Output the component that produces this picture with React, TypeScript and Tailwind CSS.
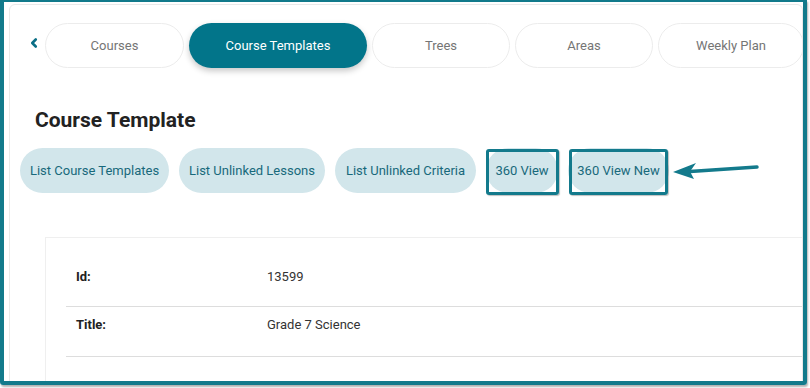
import { ChevronLeft } from 'lucide-react';

const tabs = [
  { label: 'Courses', w: 'w-[139px]' },
  { label: 'Course Templates', w: 'w-[178px]', active: true },
  { label: 'Trees', w: 'w-[138px]' },
  { label: 'Areas', w: 'w-[138px]' },
  { label: 'Weekly Plan', w: 'w-[146px]' },
  { label: '', w: 'w-[138px]' },
];

const actions = [
  { label: 'List Course Templates', w: 'w-[149px]' },
  { label: 'List Unlinked Lessons', w: 'w-[146px]' },
  { label: 'List Unlinked Criteria', w: 'w-[141px]' },
  { label: '360 View', w: 'w-[72px]', box: 'w-[73px] left-0' },
  { label: '360 View New', w: 'w-[101px]', box: 'w-[99px] left-[1px]' },
];

const details = [
  { label: 'Id:', value: '13599', pad: 'pt-[10px]' },
  { label: 'Title:', value: 'Grade 7 Science', pad: 'pt-[8px]' },
];

export default function App() {
  return (
    <div className="w-[810px] h-[388px] bg-white overflow-hidden font-['Roboto',sans-serif]">
      <div className="w-[807px] h-[385px] border-x-4 border-t-2 border-b-4 border-[#127a8b] rounded-b-[3px] shadow-[1px_2px_2px_rgba(0,0,0,0.3)] overflow-hidden">
        <div className="ml-[5px] mt-[2px] h-[400px] border border-[#e9e9e9] rounded-[6px] overflow-hidden">
          {/* tabs */}
          <div className="flex items-center pl-[17px] pt-[18px]">
            <ChevronLeft className="w-[14px] h-[14px] text-[#0b6f86] shrink-0 -mt-[5px]" strokeWidth={4.5} />
            <div className="flex gap-[5px] ml-[4px]">
              {tabs.map((t, i) =>
                t.active ? (
                  <div
                    key={i}
                    className={`${t.w} shrink-0 h-[45px] rounded-full bg-[#02758a] text-white text-[13px] flex items-center justify-center shadow-[0_3px_6px_rgba(0,0,0,0.22)]`}
                  >
                    {t.label}
                  </div>
                ) : (
                  <div
                    key={i}
                    className={`${t.w} shrink-0 h-[45px] rounded-full border border-[#ececec] text-[#757575] text-[13px] flex items-center justify-center`}
                  >
                    {t.label}
                  </div>
                )
              )}
            </div>
          </div>

          <h2 className="mt-[40px] ml-[25px] text-[21px] leading-[24px] font-bold text-[#222]">Course Template</h2>

          {/* action buttons */}
          <div className="relative flex gap-[10px] pl-[10px] mt-[16px]">
            {actions.map((a) => (
              <div key={a.label} className="relative shrink-0">
                <div
                  className={`${a.w} h-[45px] rounded-full bg-[#d2e6eb] text-[#18697b] text-[13px] flex items-center justify-center whitespace-nowrap`}
                >
                  {a.label}
                </div>
                {a.box && (
                  <div
                    className={`absolute top-[1px] h-[46px] ${a.box} border-[3px] border-[#137a8c] rounded-[3px] shadow-[1px_1px_1px_rgba(0,0,0,0.25)]`}
                  />
                )}
              </div>
            ))}
            <svg className="absolute left-[660px] top-[12px]" width="92" height="22" viewBox="0 0 92 22">
              <line x1="20" y1="11.5" x2="87" y2="7" stroke="#137a8c" strokeWidth="3.5" strokeLinecap="round" />
              <polygon points="3,12 26,3 20,11.5 24,19" fill="#137a8c" />
            </svg>
          </div>

          {/* details card */}
          <div className="ml-[35px] mt-[44px] w-[800px] h-[200px] border border-[#efefef] pt-[19px] pl-[20px]">
            {details.map((d) => (
              <div key={d.label} className={`h-[50px] border-b border-[#dddddd] flex ${d.pad} text-[13px] leading-[20px]`}>
                <div className="w-[201px] pl-[10px] font-bold text-[#222]">{d.label}</div>
                <div className="text-[#333]">{d.value}</div>
              </div>
            ))}
          </div>
        </div>
      </div>
    </div>
  );
}
